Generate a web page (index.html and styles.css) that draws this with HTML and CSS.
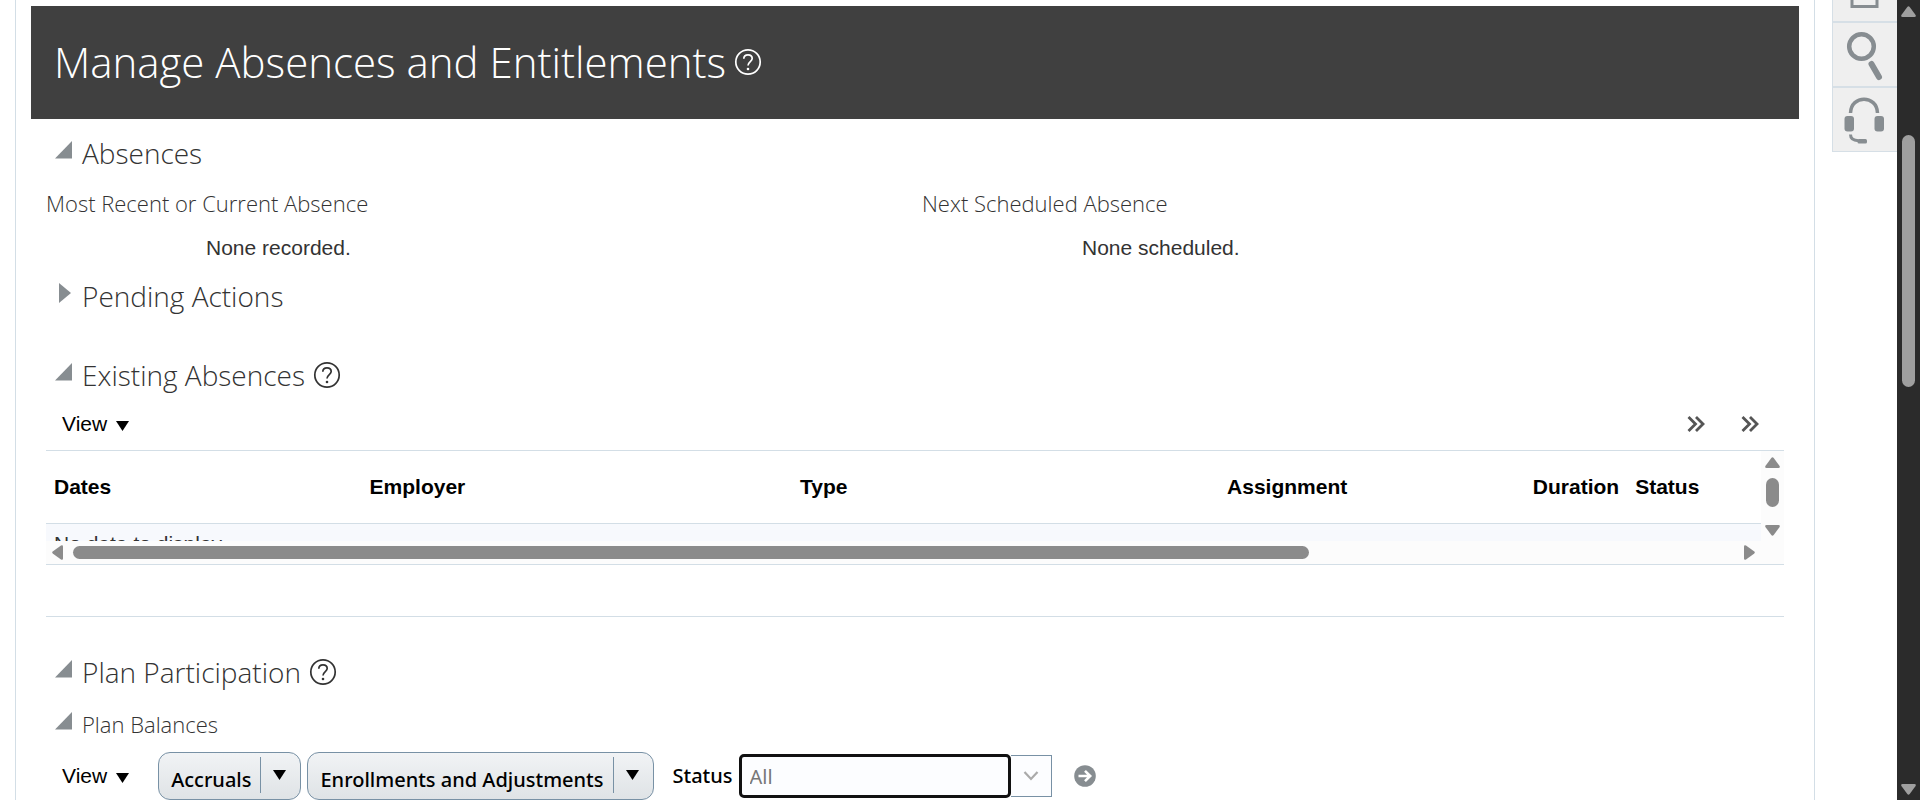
FILE: index.html
```html
<!DOCTYPE html>
<html lang="en">
<head>
<meta charset="utf-8">
<title>Manage Absences and Entitlements</title>
<link rel="stylesheet" href="styles.css">
</head>
<body>
<svg class="defs" aria-hidden="true">
  <symbol id="help" viewBox="0 0 28 28">
    <circle cx="14" cy="14" r="12.200" fill="none" stroke="currentColor" stroke-width="1.7"/>
    <path d="M9.800 10.800C9.800 8.200 11.600 6.800 14 6.800s4.200 1.500 4.200 3.800c0 2.800-4.200 3.200-4.200 6.800" fill="none" stroke="currentColor" stroke-width="1.7"/>
    <circle cx="14" cy="21" r="1.3" fill="currentColor"/>
  </symbol>
  <symbol id="open" viewBox="0 0 17 18"><path d="M17 0v17.500H0z" fill="#878d91"/></symbol>
  <symbol id="closed" viewBox="0 0 17 20"><path d="M4 0l12 10L4 20z" fill="#878d91"/></symbol>
  <symbol id="caret" viewBox="0 0 13 10"><path d="M0 0h13L6.500 10z" fill="#000"/></symbol>
  <symbol id="more" viewBox="0 0 18 16"><path d="M1.500 1l7 7-7 7M9 1l7 7-7 7" fill="none" stroke="#555" stroke-width="2.800"/></symbol>
  <symbol id="arrow" viewBox="0 0 15 11"><path d="M6.300 1Q7.500-.6 8.700 1L14.600 9Q15.400 11 13.500 11h-12Q-.4 11 .4 9z" fill="currentColor"/></symbol>
</svg>
<main class="page">
  <header class="banner">
    <h1>Manage Absences and Entitlements</h1>
    <button class="icon-button" type="button" aria-label="Help"><svg class="help"><use href="#help"/></svg></button>
  </header>

  <section class="section">
    <h2 class="heading"><button class="toggle" type="button" aria-label="Collapse Absences"><svg class="disclosure"><use href="#open"/></svg></button>Absences</h2>
    <div class="summary">
      <div><h3>Most Recent or Current Absence</h3><p>None recorded.</p></div>
      <div><h3>Next Scheduled Absence</h3><p>None scheduled.</p></div>
    </div>
  </section>

  <section class="section pending">
    <h2 class="heading"><button class="toggle" type="button" aria-label="Expand Pending Actions"><svg class="disclosure closed"><use href="#closed"/></svg></button>Pending Actions</h2>
  </section>

  <section class="section existing">
    <h2 class="heading"><button class="toggle" type="button" aria-label="Collapse Existing Absences"><svg class="disclosure"><use href="#open"/></svg></button>Existing Absences
      <button class="icon-button" type="button" aria-label="Help"><svg class="help"><use href="#help"/></svg></button></h2>
    <div class="toolbar">
      <button class="view" type="button">View <svg class="caret"><use href="#caret"/></svg></button>
      <div class="overflow">
        <button class="icon-button" type="button" aria-label="More tools"><svg class="more"><use href="#more"/></svg></button>
        <button class="icon-button" type="button" aria-label="More actions"><svg class="more"><use href="#more"/></svg></button>
      </div>
    </div>
    <div class="grid">
      <div class="grid-view">
        <table>
          <colgroup><col class="c-dates"><col class="c-employer"><col class="c-type"><col class="c-assignment"><col class="c-duration"><col></colgroup>
          <thead><tr><th>Dates</th><th>Employer</th><th>Type</th><th>Assignment</th><th class="number">Duration</th><th>Status</th></tr></thead>
          <tbody><tr><td colspan="6">No data to display.</td></tr></tbody>
        </table>
      </div>
      <div class="scroll-v">
        <svg class="arrow"><use href="#arrow"/></svg>
        <span class="thumb-v"></span>
        <svg class="arrow down"><use href="#arrow"/></svg>
      </div>
      <div class="scroll-h">
        <svg class="arrow-side" viewBox="0 0 11 15"><path d="M1 6.300Q-.6 7.500 1 8.700L9 14.600Q11 15.400 11 13.500v-12Q11-.4 9 .4z" fill="currentColor"/></svg>
        <span class="track"><span class="thumb-h"></span></span>
        <svg class="arrow-side right" viewBox="0 0 11 15"><path d="M1 6.300Q-.6 7.500 1 8.700L9 14.600Q11 15.400 11 13.500v-12Q11-.4 9 .4z" fill="currentColor"/></svg>
      </div>
    </div>
  </section>

  <section class="section plans">
    <h2 class="heading"><button class="toggle" type="button" aria-label="Collapse Plan Participation"><svg class="disclosure"><use href="#open"/></svg></button>Plan Participation
      <button class="icon-button" type="button" aria-label="Help"><svg class="help"><use href="#help"/></svg></button></h2>
    <h3 class="heading sub"><button class="toggle" type="button" aria-label="Collapse Plan Balances"><svg class="disclosure"><use href="#open"/></svg></button>Plan Balances</h3>
    <div class="plan-tools">
      <button class="view" type="button">View <svg class="caret"><use href="#caret"/></svg></button>
      <div class="split accruals"><button type="button">Accruals</button><button class="drop" type="button" aria-label="Accruals menu"><svg class="caret"><use href="#caret"/></svg></button></div>
      <div class="split enrollments"><button type="button">Enrollments and Adjustments</button><button class="drop" type="button" aria-label="Enrollments and Adjustments menu"><svg class="caret"><use href="#caret"/></svg></button></div>
      <label for="status">Status</label>
      <div class="combo">
        <input id="status" type="text" value="All">
        <button type="button" aria-label="Show statuses"><svg class="chevron" viewBox="0 0 16 10"><path d="M1.500 1L8 8l6.500-7" fill="none" stroke="#aaa" stroke-width="2.200"/></svg></button>
      </div>
      <button class="icon-button go" type="button" aria-label="Go"><svg class="go-icon" viewBox="0 0 22 22"><circle cx="11" cy="11" r="10.800" fill="#878d91"/><path d="M4.500 11H16M11 5.800l5.200 5.200-5.200 5.200" fill="none" stroke="#fff" stroke-width="2.600"/></svg></button>
    </div>
  </section>
</main>

<aside class="rail">
  <button class="first" type="button" aria-label="Home"><svg viewBox="0 0 64 21"><path d="M19 0v6.500h25V0" fill="none" stroke="#878d91" stroke-width="3"/></svg></button>
  <button type="button" aria-label="Search"><svg viewBox="0 0 64 63"><circle cx="28.500" cy="23.500" r="12.300" fill="none" stroke="#878d91" stroke-width="4.500"/><path d="M38.500 41l7.500 13" stroke="#878d91" stroke-width="6" stroke-linecap="round"/></svg></button>
  <button type="button" aria-label="Support"><svg viewBox="0 0 64 63" fill="none" stroke="#878d91"><path d="M17.500 25C18 6.500 44 6.500 44.500 25" stroke-width="3.500"/><rect x="11.500" y="28" width="9.500" height="15.500" rx="3" fill="#878d91" stroke="none"/><rect x="41.500" y="28" width="9.500" height="15.500" rx="3" fill="#878d91" stroke="none"/><path d="M17.500 46.500c0 4 3 6 8 6.300" stroke-width="3"/><rect x="24.500" y="51" width="9.500" height="4.500" rx="1.500" fill="#878d91" stroke="none"/></svg></button>
</aside>
<div class="page-scroll">
  <svg class="arrow"><use href="#arrow"/></svg>
  <span class="page-thumb"></span>
  <svg class="arrow down"><use href="#arrow"/></svg>
</div>
</body>
</html>
```
FILE: styles.css
```css
* { box-sizing: border-box; }
body {
  margin: 0;
  height: 100vh;
  overflow: hidden;
  display: flex;
  background: #fff;
  color: #333;
  font: 21px/28px "Liberation Sans", Arial, sans-serif;
}
h1, h2, h3, p { margin: 0; font-weight: 300; }
h1, h2, h3 { font-family: "Segoe UI Light", "Open Sans", sans-serif; }
button { margin: 0; padding: 0; border: 0; background: none; color: inherit; font: inherit; }
svg { display: block; }
.defs { position: absolute; width: 0; height: 0; }

.page {
  flex: 1;
  min-width: 0;
  min-height: 100vh;
  margin-left: 15px;
  padding: 6px 15px 0;
  border: solid #d3dee6;
  border-width: 0 1px;
}
.banner {
  display: flex;
  align-items: center;
  gap: 8px;
  padding: 24px 23px 25px;
  background: #404040;
  color: #fff;
}
h1 { font-size: 42px; line-height: 64px; }
.help { width: 28px; height: 28px; }

.section { padding: 12px 15px 0; }
.heading {
  display: flex;
  align-items: center;
  font-size: 28px;
  line-height: 44px;
}
.heading .icon-button { margin-left: 8px; }
.toggle { width: 36px; padding: 0 0 6px 9px; }
.disclosure { width: 17px; height: 18px; }
.disclosure.closed { height: 20px; }
h3 { font-size: 22px; line-height: 32px; }
.summary {
  display: grid;
  grid-template-columns: 1fr 1fr;
  margin: 12px -14px 0 0;
}
.summary p { padding: 15px 0 0 160px; font-weight: 400; }
.existing { padding-top: 35px; }

.toolbar {
  display: flex;
  align-items: center;
  justify-content: space-between;
  padding: 13px 25px 12px 16px;
}
.view { display: flex; align-items: center; gap: 9px; color: #000; }
.caret { width: 13px; height: 10px; margin-top: 3px; }
.overflow { display: flex; gap: 36px; }
.more { width: 18px; height: 16px; }

.grid {
  display: grid;
  grid-template-columns: 1fr 23px;
  grid-template-rows: 90px 23px;
  border: solid #d3dee6;
  border-width: 1px 0;
  background: #fcfcfc;
  color: #8b8b8b;
}
.grid-view { overflow: hidden; background: #fff; }
table { width: 100%; table-layout: fixed; border-collapse: collapse; }
.c-dates { width: 18.4%; }
.c-employer { width: 25.1%; }
.c-type { width: 24.9%; }
.c-assignment { width: 15.2%; }
.c-duration { width: 8.6%; }
th {
  padding: 22px 8px;
  border-bottom: 1px solid #d3dee6;
  color: #000;
  font-weight: 700;
  text-align: left;
}
th.number { text-align: right; }
td { padding: 6px 8px; background: #f7f9fd; color: #333; }
.scroll-v {
  display: flex;
  flex-direction: column;
  align-items: center;
  justify-content: space-between;
  padding: 6px 0 5px;
}
.arrow { width: 15px; height: 11px; flex: none; }
.down { transform: rotate(180deg); }
.thumb-v { width: 13px; height: 29px; margin-bottom: 8px; border-radius: 7px; background: #8b8b8b; }
.scroll-h { display: flex; align-items: center; gap: 10px; padding: 0 6px; }
.arrow-side { width: 11px; height: 15px; flex: none; }
.right { transform: rotate(180deg); }
.track { flex: 1; }
.thumb-h { display: block; width: 74.4%; height: 13px; border-radius: 7px; background: #8b8b8b; }

.plans { margin: 51px 15px 0; padding: 33px 0 0; border-top: 1px solid #d3dee6; }
.sub { margin-top: 14px; font-size: 22px; line-height: 32px; }
.plan-tools {
  display: flex;
  align-items: center;
  padding: 12px 0 0 16px;
  color: #000;
}
.split {
  display: flex;
  height: 48px;
  border: 1px solid #7891a5;
  border-radius: 12px;
  background: linear-gradient(#f1f3f5, #dfe3e6);
  font: 500 20px/28px "Segoe UI", "Noto Sans", sans-serif;
}
.split button { padding: 7px 9px 0 12px; }
.split .drop {
  width: 40px;
  height: 36px;
  margin-top: 4px;
  padding: 0 0 0 12px;
  border-left: 1px solid #7891a5;
}
.drop .caret { margin: 0; }
.accruals { margin-left: 29px; }
.enrollments { margin-left: 6px; }
label { margin: 0 6px 0 19px; font: 500 20px/28px "Segoe UI", "Noto Sans", sans-serif; }
.combo { display: flex; align-items: center; }
.combo input {
  width: 272px;
  height: 44px;
  padding: 0 8px;
  border: 3px solid #111;
  border-radius: 5px;
  outline: 0;
  background: #fcfdff;
  color: #777;
  font: 20px/28px "Segoe UI", "Noto Sans", sans-serif;
}
.combo button {
  width: 41px;
  height: 42px;
  padding-left: 12px;
  border: 1px solid #7891a5;
  border-left: 0;
  background: #fcfdff;
}
.chevron { width: 16px; height: 10px; }
.go { margin-left: 22px; }
.go-icon { width: 22px; height: 22px; }

.rail { width: 65px; margin-left: 17px; }
.rail button {
  display: block;
  width: 100%;
  height: 65px;
  border: solid #d6dfe6;
  border-width: 0 0 2px 1px;
  background: #efefef;
}
.rail .first { height: 23px; }
.rail button:last-child { height: 64px; border-bottom-width: 1px; }
.rail svg { width: 64px; height: 100%; }
.page-scroll {
  width: 23px;
  display: flex;
  flex-direction: column;
  align-items: center;
  padding: 6px 0 5px;
  background: #2b2b2b;
  color: #9f9f9f;
}
.page-thumb { width: 13px; height: 32%; margin: 118px 0 auto; border-radius: 7px; background: #9f9f9f; }
```
